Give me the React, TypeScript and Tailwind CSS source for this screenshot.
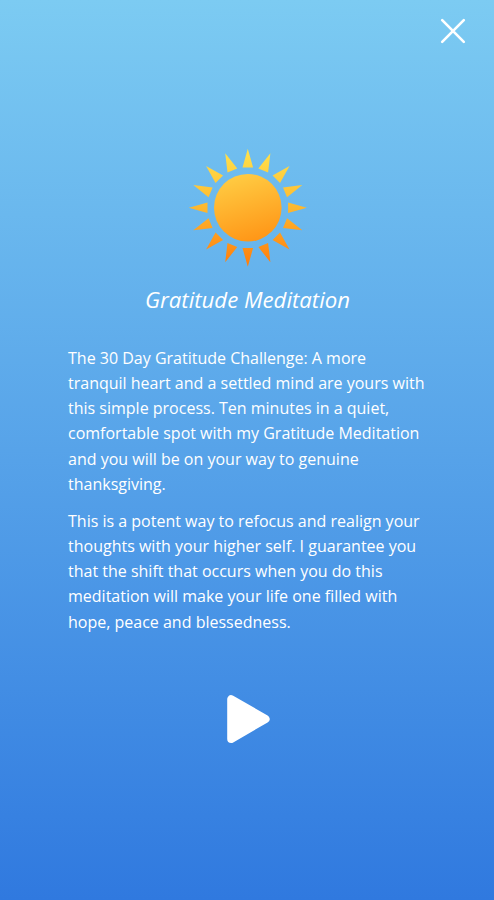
import React from "react"

const rayAngles = [0, 22.5, 45, 67.5, 90, 112.5, 135, 157.5, 180, 202.5, 225, 247.5, 270, 292.5, 315, 337.5]

function SunIcon() {
  return (
    <svg className="ml-[2px] h-[120px] w-[120px]" viewBox="-60 -60 120 120" aria-hidden="true">
      <defs>
        <linearGradient id="disc" gradientUnits="userSpaceOnUse" x1="-10" y1="-34" x2="10" y2="34">
          <stop offset="0" stopColor="#ffcc43" />
          <stop offset="1" stopColor="#ff9516" />
        </linearGradient>
        <linearGradient id="rays" gradientUnits="userSpaceOnUse" x1="0" y1="-58" x2="0" y2="58">
          <stop offset="0" stopColor="#ffe24d" />
          <stop offset="0.5" stopColor="#fdb82f" />
          <stop offset="1" stopColor="#ff7d0c" />
        </linearGradient>
        <clipPath id="rayShapes">
          {rayAngles.map((angle) => (
            <path key={angle} d="M0 -59L5.3 -40.3H-5.3Z" transform={`rotate(${angle})`} />
          ))}
        </clipPath>
      </defs>
      <g transform="translate(-0.2 -0.3)">
        <rect x="-60" y="-60" width="120" height="120" fill="url(#rays)" clipPath="url(#rayShapes)" />
        <circle r="33.8" fill="url(#disc)" />
      </g>
    </svg>
  )
}

export default function GratitudeMeditation() {
  return (
    <main className="flex h-[900px] w-full flex-col items-center bg-linear-to-b from-[#7ccbf2] via-[#57a3e9] to-[#3079df] font-['Open_Sans','Noto_Sans',sans-serif] text-white">
      <header className="flex h-[148px] w-full justify-end pt-[17.5px] pr-[28px]">
        <button className="h-[26px] w-[26px]" aria-label="Close">
          <svg viewBox="0 0 26 26" fill="none" stroke="white" strokeWidth="2.6" strokeLinecap="round">
            <path d="M2.2 2.2L23.8 23.8M23.8 2.2L2.2 23.8" />
          </svg>
        </button>
      </header>

      <SunIcon />

      <h1 className="mt-[16px] ml-px text-[22.2px] leading-[32px] italic whitespace-nowrap">Gratitude Meditation</h1>

      <div className="mt-[30px] flex w-[358px] flex-col gap-[12px] text-[16px] leading-[25.15px] whitespace-nowrap">
        <p>
          The 30 Day Gratitude Challenge: A more
          <br />
          tranquil heart and a settled mind are yours with
          <br />
          this simple process. Ten minutes in a quiet,
          <br />
          comfortable spot with my Gratitude Meditation
          <br />
          and you will be on your way to genuine
          <br />
          thanksgiving.
        </p>
        <p>
          This is a potent way to refocus and realign your
          <br />
          thoughts with your higher self. I guarantee you
          <br />
          that the shift that occurs when you do this
          <br />
          meditation will make your life one filled with
          <br />
          hope, peace and blessedness.
        </p>
      </div>

      <button className="mt-[59px] ml-[2px] h-[50px] w-[44px]" aria-label="Play">
        <svg viewBox="0 0 44 50" fill="white" stroke="white" strokeWidth="8" strokeLinejoin="round">
          <path d="M5.2 5.2V45L39.6 25Z" />
        </svg>
      </button>
    </main>
  )
}
